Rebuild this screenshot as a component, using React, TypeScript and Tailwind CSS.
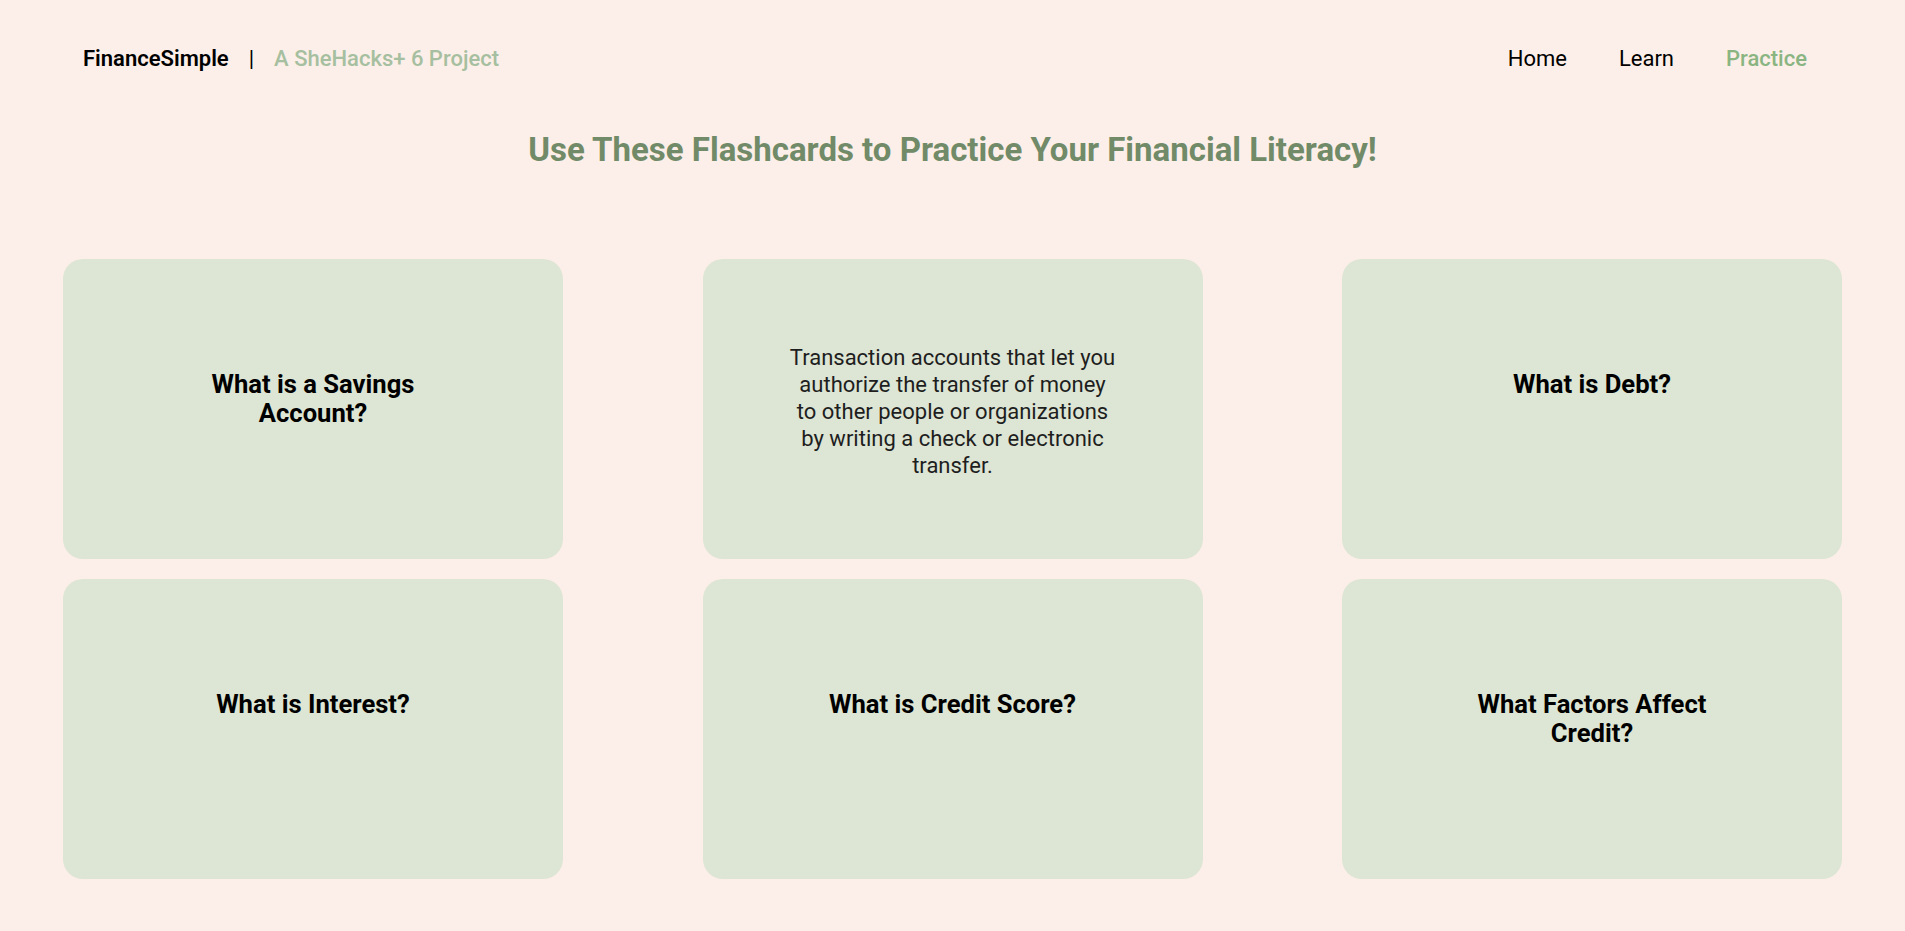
import React from 'react'

const CARDS = [
  { text: 'What is a Savings Account?', answer: false },
  {
    text: 'Transaction accounts that let you authorize the transfer of money to other people or organizations by writing a check or electronic transfer.',
    answer: true,
  },
  { text: 'What is Debt?', answer: false },
  { text: 'What is Interest?', answer: false },
  { text: 'What is Credit Score?', answer: false },
  { text: 'What Factors Affect Credit?', answer: false },
]

function Flashcard({ text, answer }: { text: string; answer: boolean }) {
  if (answer) {
    return (
      <div className="h-[300px] rounded-[20px] bg-[#dde5d4] flex items-center justify-center pt-[5px]">
        <p className="max-w-[330px] text-center text-[22px] leading-[27px] text-[#1e1e1e]">{text}</p>
      </div>
    )
  }
  return (
    <div className="h-[300px] rounded-[20px] bg-[#dde5d4] flex flex-col items-center pt-[111px]">
      <h2 className="max-w-[260px] text-center text-[25.6px] leading-[29px] font-bold text-black">{text}</h2>
    </div>
  )
}

export default function App() {
  return (
    <div className="min-h-screen bg-[#fcefe9] font-['Roboto',sans-serif]">
      {/* Header */}
      <header className="flex items-center justify-between pl-[83px] pr-[98px] h-[116px] text-[22px]">
        <div className="flex items-center gap-[20px]">
          <span className="font-semibold text-black">FinanceSimple</span>
          <span className="text-black">|</span>
          <span className="font-medium text-[#a6bfa0]">A SheHacks+ 6 Project</span>
        </div>
        <nav className="flex items-center gap-[52px]">
          <a className="text-black">Home</a>
          <a className="text-black">Learn</a>
          <a className="font-medium text-[#8ab582]">Practice</a>
        </nav>
      </header>

      <h1 className="mt-[14px] text-center text-[33px] leading-[40px] font-bold text-[#718a68]">
        Use These Flashcards to Practice Your Financial Literacy!
      </h1>

      {/* Cards */}
      <main className="grid grid-cols-[500px_500px_500px] justify-between gap-y-[20px] px-[63px] mt-[89px] pb-[54px]">
        {CARDS.map(c => (
          <Flashcard key={c.text} text={c.text} answer={c.answer} />
        ))}
      </main>
    </div>
  )
}
